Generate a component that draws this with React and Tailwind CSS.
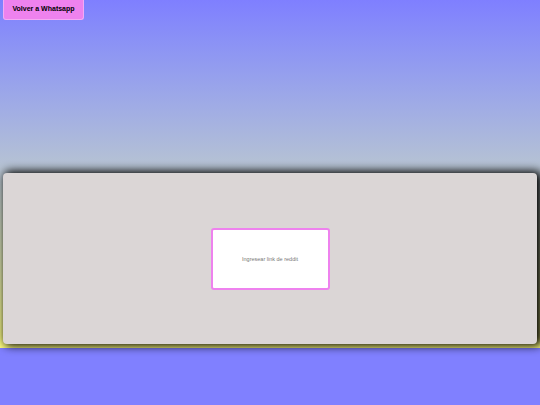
export default function App() {
    return (
        <div className="min-h-screen bg-[#8080ff]" style={{ fontFamily: '"Liberation Sans", Arial, sans-serif' }}>
            <div className="h-[348px] bg-gradient-to-b from-[#7f7fff] to-[#ffff7f] flex flex-col">
                {/* Back button */}
                <button className="ml-[3px] w-[81px] h-[20px] bg-[#ee82ee] border border-[#f4aaf4] border-t-0 rounded-b-[3px] text-[7px] font-bold text-black">
                    Volver a Whatsapp
                </button>

                {/* Card */}
                <div className="mt-[153px] ml-[3px] w-[534px] h-[171px] bg-[#dbd6d6] rounded-[4px] shadow-[3px_0_10px_2px_#000] flex items-center justify-center">
                    <input
                        type="text"
                        placeholder="Ingresear link de reddit"
                        className="w-[119px] h-[62px] bg-white border-2 border-[#ee82ee] rounded-[3px] text-center text-[5.5px] text-gray-600 placeholder:text-[#777] outline-none"
                    />
                </div>
            </div>
        </div>
    );
}
